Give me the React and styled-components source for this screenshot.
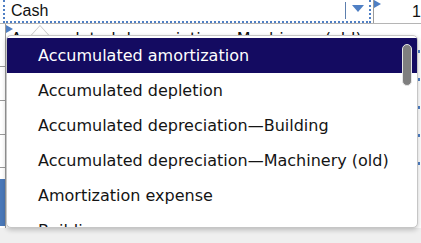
import React from 'react';
import styled, { createGlobalStyle } from 'styled-components';

const GlobalStyle = createGlobalStyle`
  html, body {
    margin: 0;
    padding: 0;
    background: #ffffff;
    overflow: hidden;
  }
`;

const Sheet = styled.div`
  position: relative;
  width: 421px;
  height: 243px;
  display: flex;
  flex-direction: column;
  background: #ffffff;
  overflow: hidden;
`;

const TopRow = styled.div`
  display: flex;
  height: 23px;
  border-bottom: 1px solid #b5b5b5;
`;

const SelectedCell = styled.div`
  position: relative;
  display: flex;
  align-items: center;
  width: 368px;
  margin-left: 3px;
  border: 2px dotted #4f7fc4;
  border-top: none;
  box-sizing: border-box;
  padding-left: 6px;
  font-family: "Liberation Sans", Arial, sans-serif;
  font-size: 16px;
  color: #111;
`;

const CellText = styled.span`
  flex: 1;
  line-height: 20px;
`;

const DropButton = styled.div`
  display: flex;
  align-items: flex-start;
  justify-content: center;
  width: 24px;
  height: 17px;
  margin-top: -1px;
  border-left: 1px solid #5d7fae;
  padding-top: 3px;
  box-sizing: border-box;
`;

const NumberCell = styled.div`
  position: relative;
  flex: 1;
  display: flex;
  justify-content: flex-end;
  align-items: center;
  border-left: 1px solid #9a9a9a;
  margin-left: 2px;
  font-family: "Liberation Sans", Arial, sans-serif;
  font-size: 16px;
  color: #111;
  overflow: hidden;
`;

const Marker = styled.span`
  position: absolute;
  left: 0;
  top: ${p => p.top || 0}px;
  width: 0;
  height: 0;
  border-top: 4px solid transparent;
  border-bottom: 4px solid transparent;
  border-left: 7px solid #4f7fc4;
`;

const Body = styled.div`
  display: flex;
  flex: 1;
`;

const LeftRail = styled.div`
  display: flex;
  flex-direction: column;
  width: 5px;
  border-right: 1px solid #9a9a9a;
`;

const RailRow = styled.div`
  height: ${p => p.h}px;
  border-bottom: 1px solid ${p => (p.plain ? 'transparent' : '#9a9a9a')};
`;

const RailBar = styled.div`
  height: ${p => p.h}px;
  background: #4a78b8;
`;

const MainArea = styled.div`
  position: relative;
  flex: 1;
`;

const BehindRow = styled.div`
  height: 30px;
  padding-left: 5px;
  padding-top: 5px;
  font-family: "DejaVu Sans", Verdana, sans-serif;
  font-size: 16px;
  color: #111;
  white-space: nowrap;
`;

const RightRail = styled.div`
  display: flex;
  flex-direction: column;
  width: 4px;
  padding-top: 26px;
  gap: 25px;
`;

const Tick = styled.div`
  width: 3px;
  height: 3px;
  background: #4f7fc4;
`;

const Footer = styled.div`
  height: 15px;
  background: #efefef;
`;

const Popup = styled.div`
  position: absolute;
  left: 6px;
  top: 35px;
  width: 412px;
  height: 193px;
  box-sizing: border-box;
  background: #ffffff;
  border: 1px solid #c6c6c6;
  border-radius: 5px;
  box-shadow: 0 2px 5px rgba(0, 0, 0, 0.22);
  overflow: hidden;
`;

const Notch = styled.div`
  position: absolute;
  left: 30px;
  top: 25px;
  width: 0;
  height: 0;
  border-left: 10px solid transparent;
  border-right: 10px solid transparent;
  border-bottom: 11px solid #c6c6c6;

  &::after {
    content: '';
    position: absolute;
    left: -9px;
    top: 1px;
    border-left: 9px solid transparent;
    border-right: 9px solid transparent;
    border-bottom: 10px solid #ffffff;
  }
`;

const List = styled.ul`
  list-style: none;
  margin: 0;
  padding: 2px 0 0;
`;

const Item = styled.li`
  height: 35px;
  display: flex;
  align-items: center;
  padding-left: 31px;
  font-family: "DejaVu Sans", Verdana, sans-serif;
  font-size: 16px;
  white-space: nowrap;
  color: ${p => (p.active ? '#ffffff' : '#141414')};
  background: ${p => (p.active ? '#140b61' : 'transparent')};
`;

const Thumb = styled.div`
  position: absolute;
  right: 5px;
  top: 8px;
  width: 10px;
  height: 42px;
  border-radius: 5px;
  background: #7f7f7f;
  border: 1px solid #e6e6e6;
  box-sizing: border-box;
`;

const accounts = [
  'Accumulated amortization',
  'Accumulated depletion',
  'Accumulated depreciation\u2014Building',
  'Accumulated depreciation\u2014Machinery (old)',
  'Amortization expense',
  'Buildings',
];

const ArrowDown = () => (
  <svg width="12" height="7" viewBox="0 0 12 7">
    <path d="M0 0 H12 L6 7 Z" fill="#4f7fc4" />
  </svg>
);

const App = () => {
  return (
    <>
      <GlobalStyle />
      <Sheet>
        <TopRow>
          <SelectedCell>
            <CellText>Cash</CellText>
            <DropButton>
              <ArrowDown />
            </DropButton>
          </SelectedCell>
          <NumberCell>
            <Marker top={0} />
            1
          </NumberCell>
        </TopRow>
        <Body>
          <LeftRail>
            <RailRow h={42} />
            <RailRow h={33} />
            <RailRow h={33} />
            <RailRow h={32} />
            <RailRow h={10} plain />
            <RailBar h={47} />
          </LeftRail>
          <MainArea>
            <Marker top={1} />
            <BehindRow>{accounts[3]}</BehindRow>
          </MainArea>
          <RightRail>
            <Tick />
            <Tick />
            <Tick />
            <Tick />
            <Tick />
          </RightRail>
        </Body>
        <Footer />
        <Notch />
        <Popup>
          <List>
            {accounts.map((a, i) => (
              <Item key={a} active={i === 0}>
                {a}
              </Item>
            ))}
          </List>
          <Thumb />
        </Popup>
      </Sheet>
    </>
  );
};

export default App;
